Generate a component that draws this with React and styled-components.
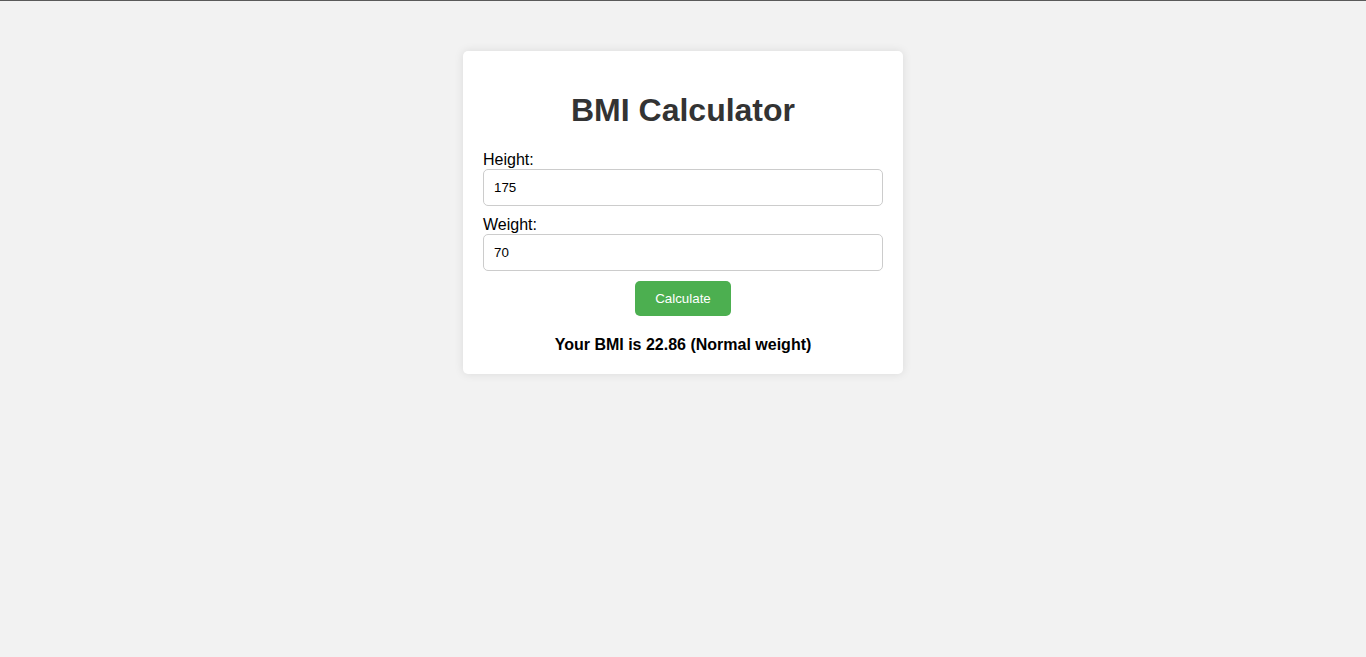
import styled, { createGlobalStyle } from "styled-components";

const GlobalStyle = createGlobalStyle`
  body {
    margin: 0;
    background: #f2f2f2;
    border-top: 1px solid #5a5a5a;
    font-family: "Liberation Sans", Arial, sans-serif;
  }
`;

const Card = styled.div`
  width: 400px;
  margin: 50px auto;
  padding: 20px;
  background: #fff;
  border-radius: 5px;
  box-shadow: 0 0 10px rgba(0, 0, 0, 0.1);
`;

const Title = styled.h1`
  margin: 21px 0 22px;
  font-size: 32px;
  line-height: 37px;
  color: #333;
  text-align: center;
`;

const Label = styled.label`
  display: block;
  font-size: 16px;
  line-height: 18px;
  color: #000;
`;

const Input = styled.input`
  display: block;
  box-sizing: border-box;
  width: 100%;
  height: 37px;
  margin-bottom: 10px;
  padding: 10px;
  border: 1px solid #ccc;
  border-radius: 5px;
  font-family: "Liberation Sans", Arial, sans-serif;
  font-size: 13.33px;
  color: #000;
  outline: none;
`;

const ButtonRow = styled.div`
  display: flex;
  justify-content: center;
`;

const Button = styled.button`
  height: 35px;
  padding: 0 20px;
  border: none;
  border-radius: 5px;
  background: #4caf50;
  color: #fff;
  font-family: "Liberation Sans", Arial, sans-serif;
  font-size: 13.33px;
  cursor: pointer;
`;

const Result = styled.div`
  margin-top: 20px;
  font-size: 16px;
  line-height: 18px;
  font-weight: bold;
  text-align: center;
  color: #000;
`;

export default function App() {
  return (
    <>
      <GlobalStyle />
      <Card>
        <Title>BMI Calculator</Title>
        <Label htmlFor="height">Height:</Label>
        <Input id="height" type="text" defaultValue="175" />
        <Label htmlFor="weight">Weight:</Label>
        <Input id="weight" type="text" defaultValue="70" />
        <ButtonRow>
          <Button>Calculate</Button>
        </ButtonRow>
        <Result>Your BMI is 22.86 (Normal weight)</Result>
      </Card>
    </>
  );
}
